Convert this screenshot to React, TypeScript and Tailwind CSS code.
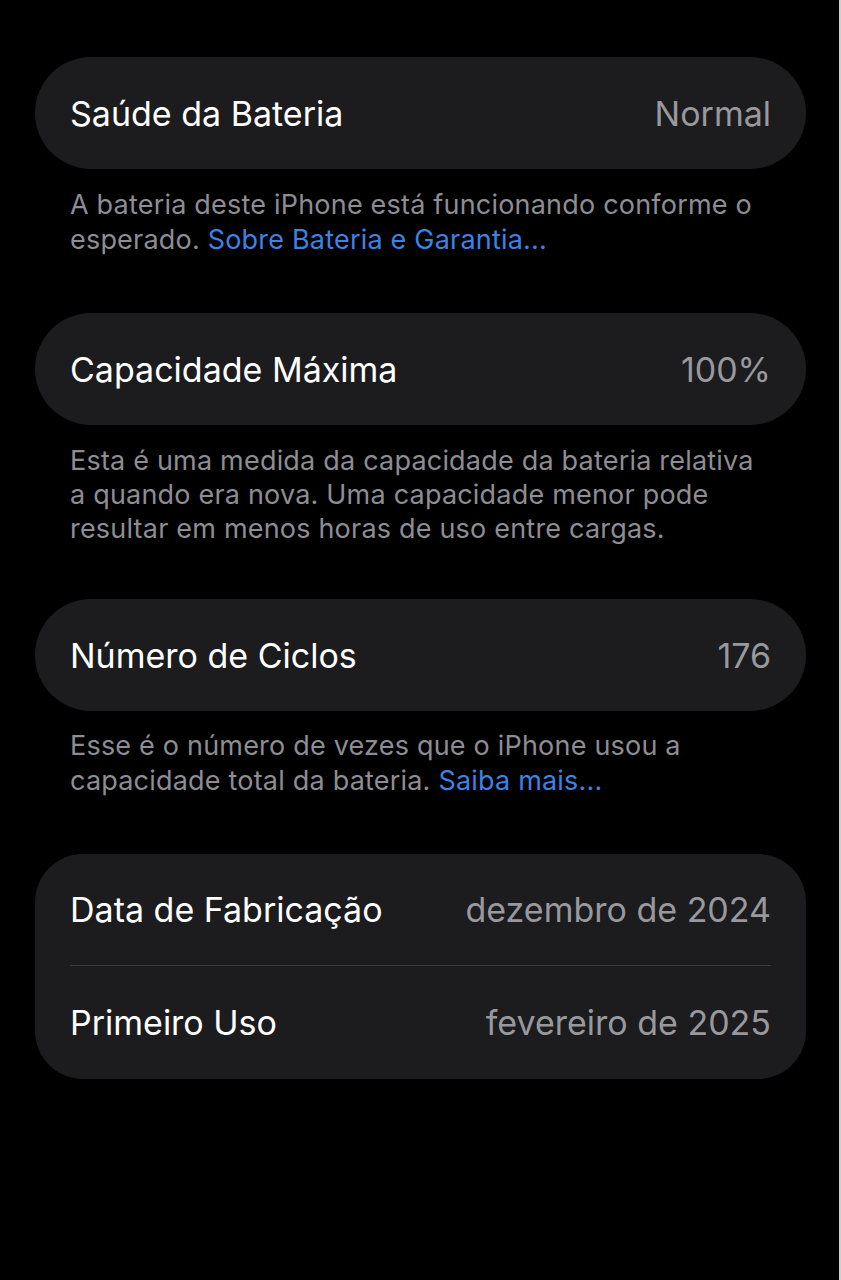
export default function App() {
  const font = { fontFamily: 'Inter, "Noto Sans", sans-serif' }

  return (
    <main
      className="min-h-[1280px] w-[841px] bg-black flex"
      style={font}
    >
      <div className="flex-1 pt-[57px]">
        {/* Saúde da Bateria */}
        <div className="ml-[35px] mr-[33px] h-[112px] rounded-[56px] bg-[#1c1c1e] px-[35px] flex items-center justify-between">
          <span className="text-[34px] text-white">Saúde da Bateria</span>
          <span className="text-[34px] text-[#98989d]">Normal</span>
        </div>
        <p className="mt-[18px] mb-[56px] pl-[70px] pr-[70px] text-[27px] tracking-[0.2px] leading-[35px] text-[#8d8d93]">
          A bateria deste iPhone está funcionando conforme o esperado.{' '}
          <span className="text-[#3d82e6]">Sobre Bateria e Garantia...</span>
        </p>

        {/* Capacidade Máxima */}
        <div className="ml-[35px] mr-[33px] h-[112px] rounded-[56px] bg-[#1c1c1e] px-[35px] flex items-center justify-between">
          <span className="text-[34px] text-white">Capacidade Máxima</span>
          <span className="text-[34px] text-[#98989d]">100%</span>
        </div>
        <p className="mt-[19px] mb-[53px] pl-[70px] pr-[70px] text-[27px] tracking-[0.2px] leading-[34px] text-[#8d8d93]">
          Esta é uma medida da capacidade da bateria relativa a quando era nova. Uma capacidade menor pode
          resultar em menos horas de uso entre cargas.
        </p>

        {/* Número de Ciclos */}
        <div className="ml-[35px] mr-[33px] h-[112px] rounded-[56px] bg-[#1c1c1e] px-[35px] flex items-center justify-between">
          <span className="text-[34px] text-white">Número de Ciclos</span>
          <span className="text-[34px] text-[#98989d]">176</span>
        </div>
        <p className="mt-[17px] mb-[56px] pl-[70px] pr-[70px] text-[27px] tracking-[0.2px] leading-[35px] text-[#8d8d93]">
          Esse é o número de vezes que o iPhone usou a capacidade total da bateria.{' '}
          <span className="text-[#3d82e6]">Saiba mais...</span>
        </p>

        {/* Datas */}
        <div className="ml-[35px] mr-[33px] rounded-[48px] bg-[#1c1c1e] px-[35px]">
          <div className="h-[111px] flex items-center justify-between">
            <span className="text-[34px] text-white">Data de Fabricação</span>
            <span className="text-[34px] text-[#98989d]">dezembro de 2024</span>
          </div>
          <div className="h-px bg-[#3a3a3c]" />
          <div className="h-[113px] flex items-center justify-between">
            <span className="text-[34px] text-white">Primeiro Uso</span>
            <span className="text-[34px] text-[#98989d]">fevereiro de 2025</span>
          </div>
        </div>
      </div>
      <div className="w-[2px] bg-[#cfcfcf]" />
    </main>
  )
}
